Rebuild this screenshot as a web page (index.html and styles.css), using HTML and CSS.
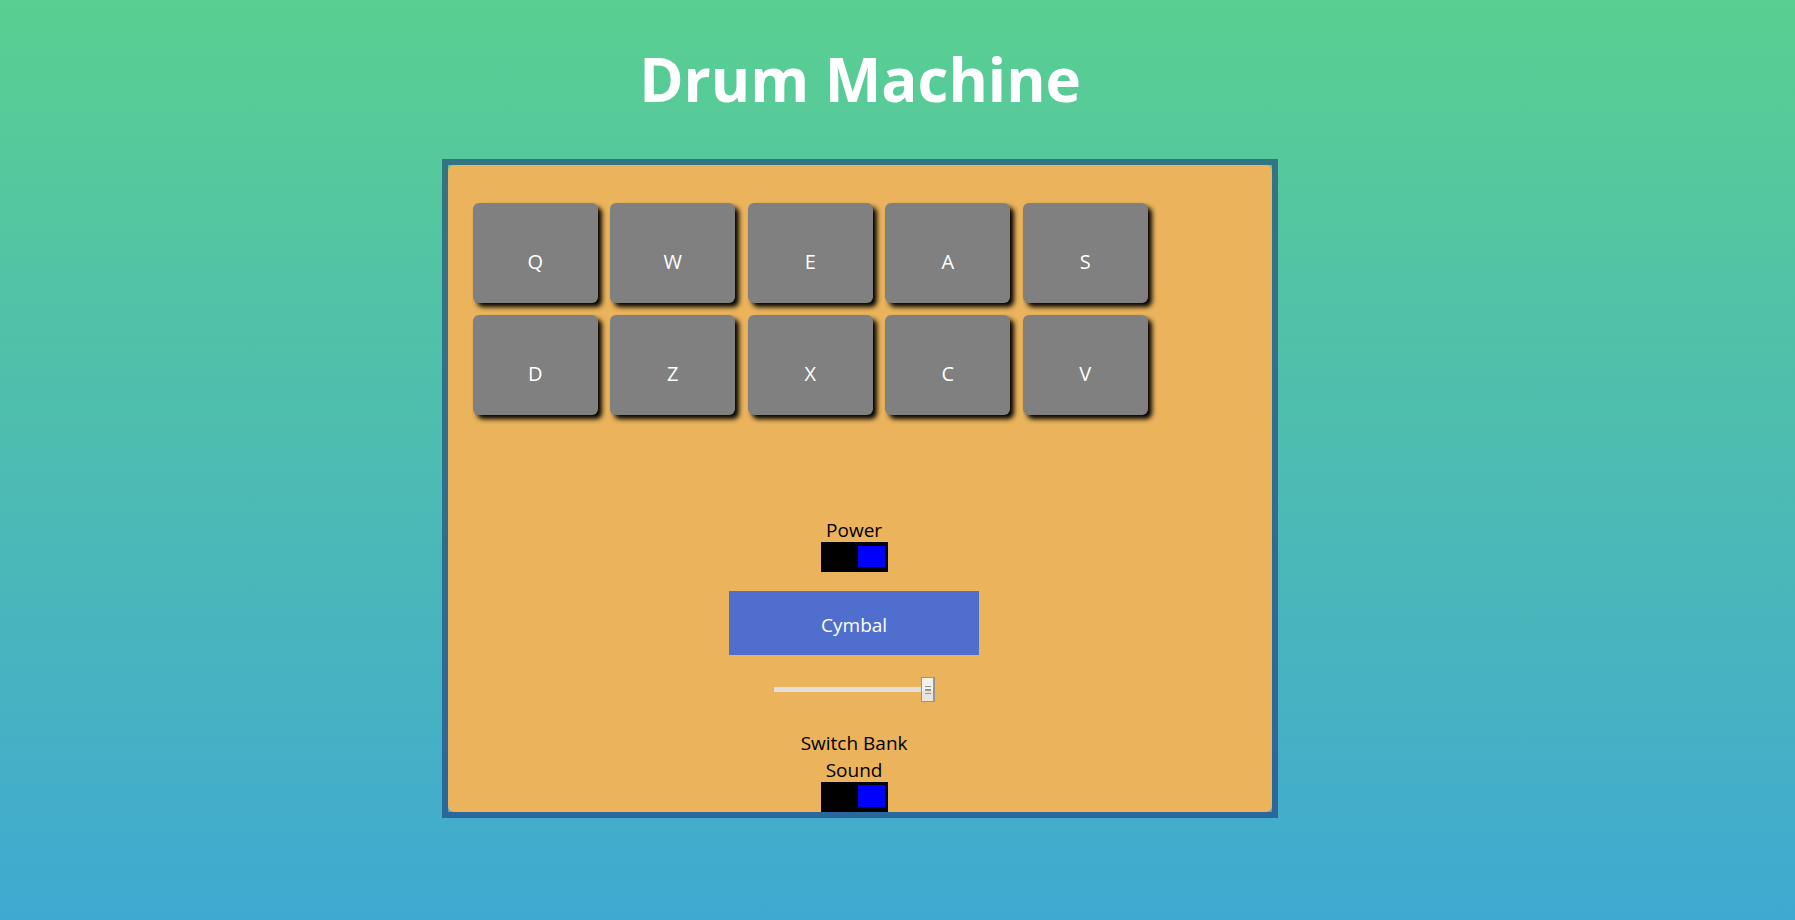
FILE: index.html
```html
<!DOCTYPE html>
<html lang="en">
<head>
<meta charset="utf-8">
<meta name="viewport" content="width=device-width, initial-scale=1">
<title>Drum Machine</title>
<link rel="stylesheet" href="styles.css">
</head>
<body>
<main class="page">
  <h1 class="title">Drum Machine</h1>
  <div class="frame">
    <div class="machine">
      <div class="pads">
        <button class="pad" type="button">Q</button>
        <button class="pad" type="button">W</button>
        <button class="pad" type="button">E</button>
        <button class="pad" type="button">A</button>
        <button class="pad" type="button">S</button>
        <button class="pad" type="button">D</button>
        <button class="pad" type="button">Z</button>
        <button class="pad" type="button">X</button>
        <button class="pad" type="button">C</button>
        <button class="pad" type="button">V</button>
      </div>
      <div class="controls">
        <label class="switch" for="power">Power</label>
        <input class="toggle" id="power" type="checkbox" checked>
        <output class="display">Cymbal</output>
        <input class="volume" type="range" min="0" max="100" value="100" aria-label="Volume">
        <label class="switch" for="bank">Switch Bank Sound</label>
        <input class="toggle toggle-bank" id="bank" type="checkbox" checked>
      </div>
    </div>
  </div>
</main>
</body>
</html>
```
FILE: styles.css
```css
* {
  box-sizing: border-box;
}

body {
  min-height: 100vh;
  margin: 0;
  background: linear-gradient(to bottom, #5acf91, #40a9d2);
  color: #000;
  font-family: "Segoe UI", "Open Sans", "Noto Sans", sans-serif;
  font-size: 19px;
  line-height: 27px;
}

.page {
  width: calc(46% + 11px);
  min-width: 740px;
  margin-left: calc(25% - 7px);
  padding: 39px 0 32px;
}

.title {
  margin: 0 0 40px;
  color: #fff;
  font-size: 60px;
  line-height: 80px;
  text-align: center;
}

.frame {
  border: 6px solid rgba(15, 33, 110, 0.5);
}

.machine {
  padding-top: 38px;
  border-radius: 6px;
  background: #eab35c;
}

.pads {
  display: grid;
  grid-template-columns: repeat(5, 125px);
  justify-content: space-between;
  row-gap: 12px;
  width: 675px;
  margin-left: 25px;
}

.pad {
  height: 100px;
  padding: 16px 0 0;
  border: 0;
  border-radius: 6px;
  background: #808080;
  box-shadow: 4px 4px 5px #000;
  color: #fff;
  font: inherit;
  font-size: 20px;
}

.controls {
  display: flex;
  flex-direction: column;
  align-items: center;
  padding: 100px 12px 0 0;
}

.switch {
  width: 125px;
  margin: 2px 0 -2px;
  text-align: center;
}

.toggle {
  appearance: none;
  display: flex;
  justify-content: flex-start;
  width: 67px;
  height: 30px;
  margin: 0;
  padding: 4px 3px 5px;
  background: #000;
}

.toggle-bank {
  padding: 3px 3px 5px;
}

.toggle::before {
  content: "";
  width: 27px;
  background: #00f;
}

.toggle:checked {
  justify-content: flex-end;
}

.display {
  width: 250px;
  margin: 19px 0 22px;
  padding: 21px 0 16px;
  background: #506ece;
  color: #fff;
  text-align: center;
}

.volume {
  appearance: none;
  width: 161px;
  height: 25px;
  margin: 0 0 26px;
  background: transparent;
}

.volume::-webkit-slider-runnable-track {
  height: 5px;
  background: #e3dfda;
}

.volume::-webkit-slider-thumb {
  appearance: none;
  width: 14px;
  height: 25px;
  margin-top: -10px;
  border: 1px solid #9a948c;
  border-right-width: 2px;
  background:
    linear-gradient(#9a948c, #9a948c) 3px 8px / 6px 1px no-repeat,
    linear-gradient(#9a948c, #9a948c) 3px 11px / 6px 2px no-repeat,
    linear-gradient(#9a948c, #9a948c) 3px 15px / 6px 1px no-repeat,
    linear-gradient(#f3f1ee 0 55%, #e8e4df 55%);
}
```
